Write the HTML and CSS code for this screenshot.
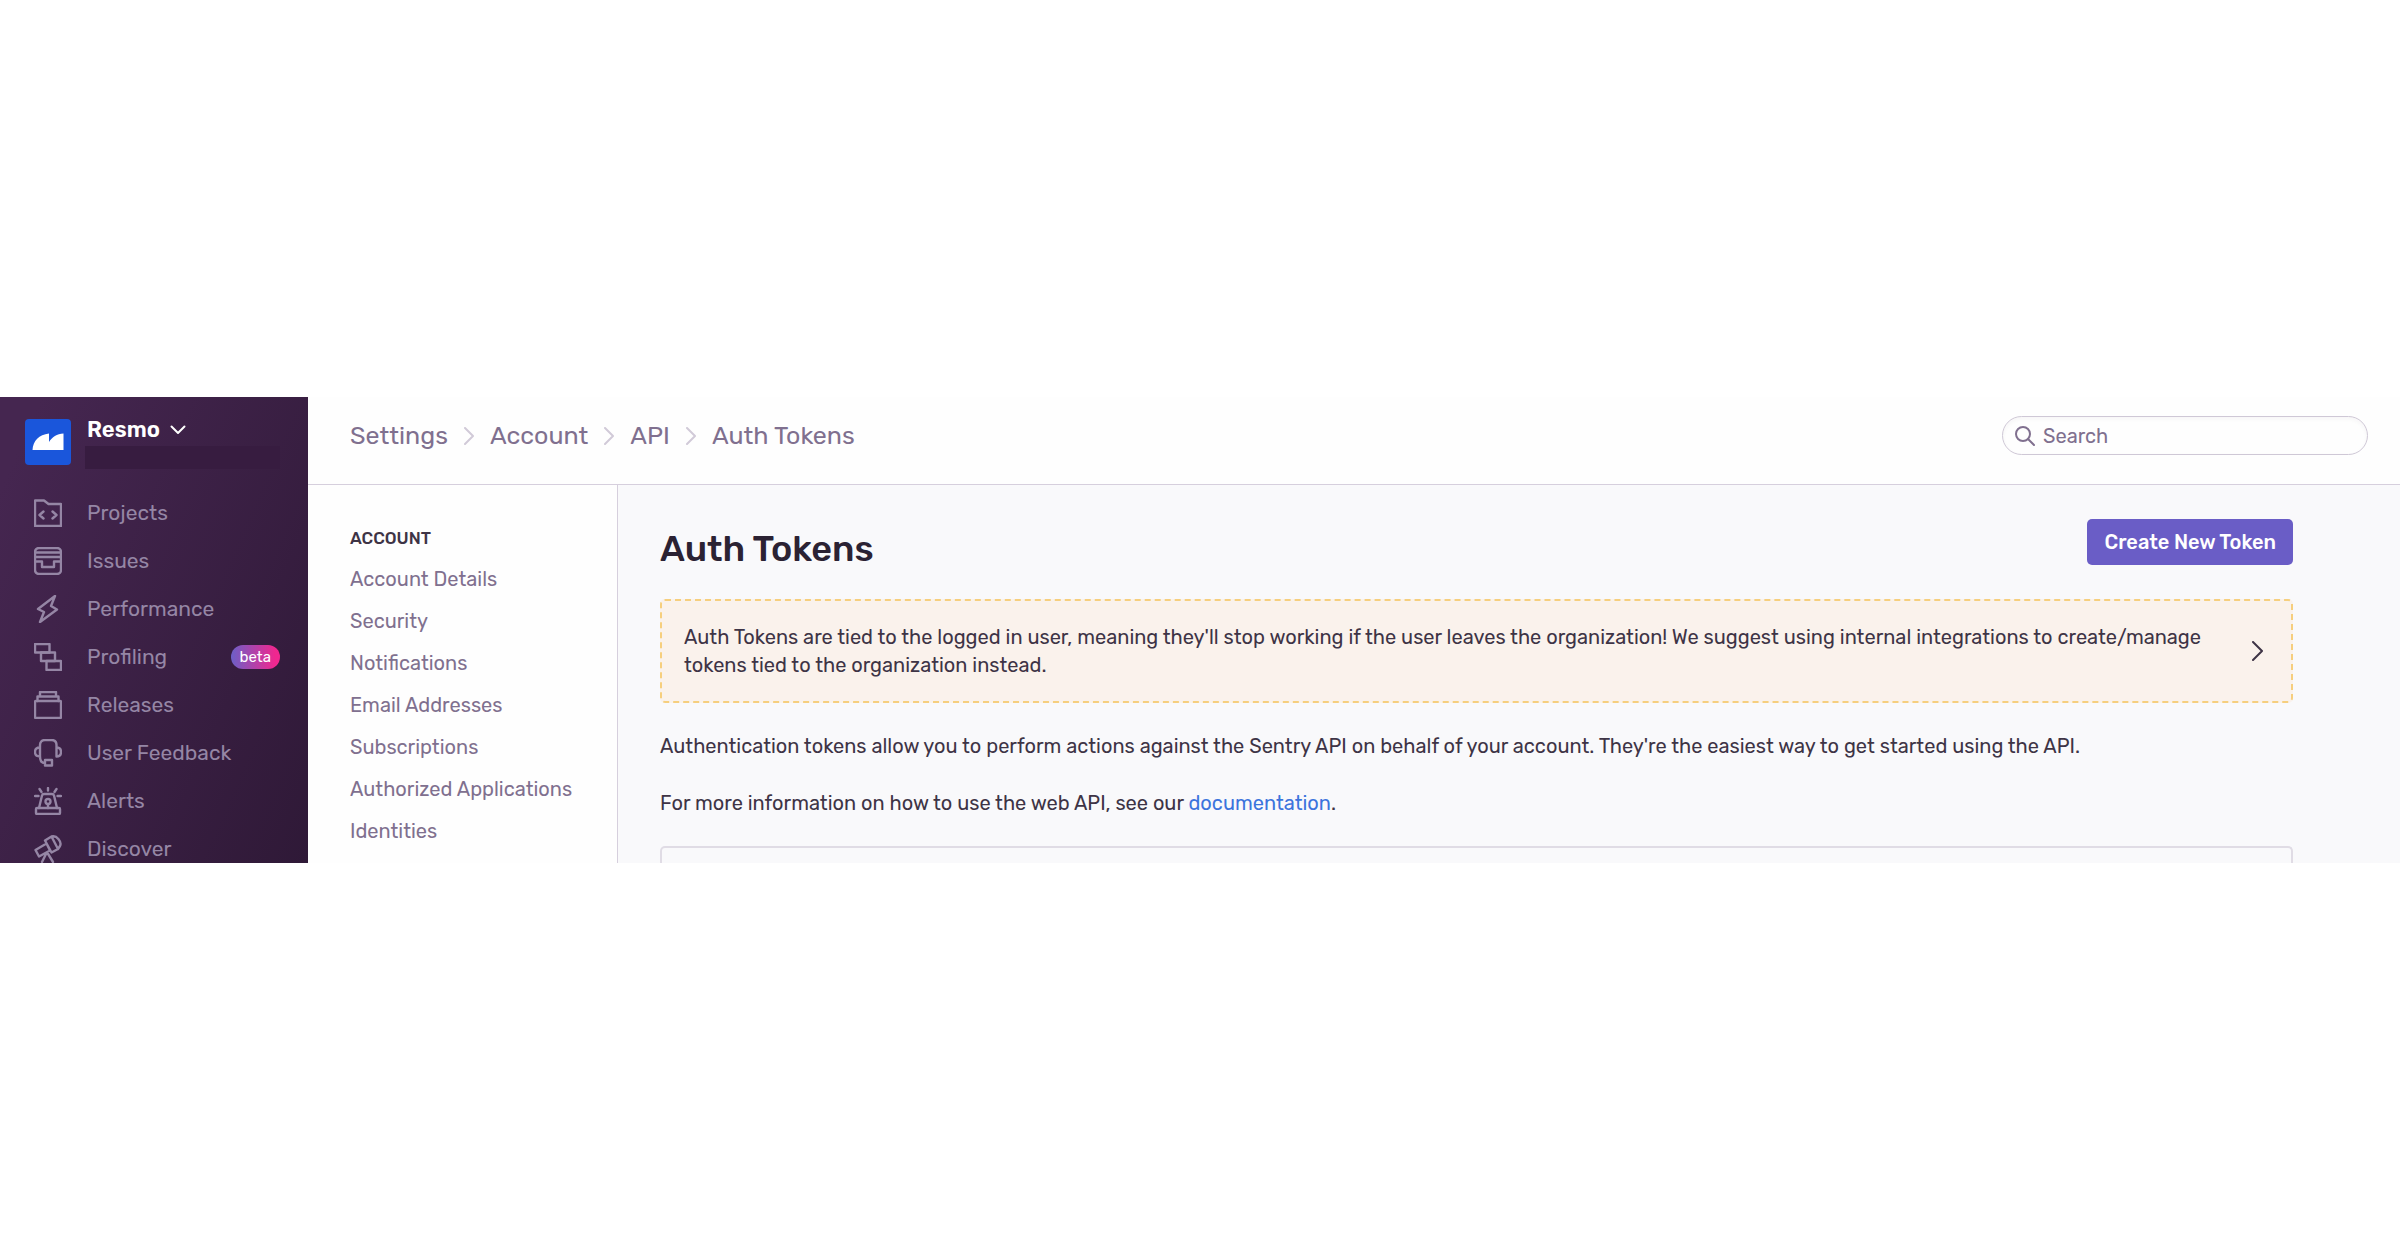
FILE: index.html
```html
<!DOCTYPE html>
<html lang="en">
<head>
<meta charset="utf-8">
<title>Auth Tokens</title>
<link rel="stylesheet" href="styles.css">
</head>
<body>
<div class="app">
  <aside class="sidebar">
    <div class="org">
      <svg class="org-logo" viewBox="0 0 46 46" aria-hidden="true">
        <rect width="46" height="46" rx="4" fill="#1a56db"/>
        <path d="M7.500 31C8 22 14 15.500 24 14.500V23C27 18 32 15 38.500 14.500V31Z" fill="#fff"/>
      </svg>
      <div class="org-info">
        <button class="org-name" type="button">Resmo
          <svg class="caret" viewBox="0 0 16 10" aria-hidden="true"><path d="M1.500 1.500L8 8L14.500 1.500"/></svg>
        </button>
        <div class="org-user"></div>
      </div>
    </div>
    <nav class="menu" aria-label="Main">
      <a class="menu-item" href="#">
        <svg class="icon" viewBox="0 0 28 28" aria-hidden="true"><path d="M1 1.500H10L14.500 5H27V27H1ZM9.500 12.500L5.500 16L9.500 19.500M18.500 12.500L22.500 16L18.500 19.500"/></svg>
        <span>Projects</span>
      </a>
      <a class="menu-item" href="#">
        <svg class="icon" viewBox="0 0 28 28" aria-hidden="true"><rect x="1" y="1" width="26" height="26" rx="4"/><path d="M1 5.500H27M1 10H27M1 14.500H8V20H20V14.500H27"/></svg>
        <span>Issues</span>
      </a>
      <a class="menu-item" href="#">
        <svg class="icon" viewBox="0 0 28 28" aria-hidden="true"><path d="M21 1L4 14L10 17L6 27L23 14.500L17 11Z"/></svg>
        <span>Performance</span>
      </a>
      <a class="menu-item" href="#">
        <svg class="icon" viewBox="0 0 28 28" aria-hidden="true"><rect x="1" y="1" width="14.500" height="8.500"/><rect x="7" y="9.500" width="14" height="8.500"/><rect x="12.500" y="18" width="14.500" height="9"/></svg>
        <span>Profiling</span>
        <span class="badge">beta</span>
      </a>
      <a class="menu-item" href="#">
        <svg class="icon" viewBox="0 0 28 28" aria-hidden="true"><rect x="1" y="10" width="26" height="17" rx="1"/><path d="M3.500 10V5.500H24.500V10M6 5.500V1H22V5.500"/></svg>
        <span>Releases</span>
      </a>
      <a class="menu-item" href="#">
        <svg class="icon" viewBox="0 0 28 28" aria-hidden="true"><path d="M6 17.500V6C6 3 8 1 11 1H17.500C20.500 1 22.500 3 22.500 6V17.500M6 8.500C2.500 8.500 1 10 1 13C1 16 2.500 17.500 6 17.500M22.500 8.500C25.500 8.500 27 10 27 13C27 16 25.500 17.500 22.500 17.500M6 17.500C6 22 7.500 24 11 24M11 21H18V26.500H11Z"/></svg>
        <span>User Feedback</span>
      </a>
      <a class="menu-item" href="#">
        <svg class="icon" viewBox="0 0 28 28" aria-hidden="true"><rect x="2" y="21" width="24" height="6" rx="1"/><path d="M5 21L8 8.500C8.300 7.500 9 7 10 7H18C19 7 19.700 7.500 20 8.500L23 21M14 17V21M14 1V3.500M5.500 2L7.500 5M22.500 2L20.500 5M1 9H4.500M23.500 9H27"/><circle cx="14" cy="14.500" r="2.500"/></svg>
        <span>Alerts</span>
      </a>
      <a class="menu-item" href="#">
        <svg class="icon" viewBox="0 0 28 28" aria-hidden="true"><path d="M1.500 15L12.500 8.500L16 15.500L5 21.500ZM11 5.500L17.500 1.500L24 14L17.500 17.500ZM17.500 1.500C23 0 28 7 26 11L24 14M12.500 18L8 27M13.500 18L19 27"/></svg>
        <span>Discover</span>
      </a>
    </nav>
  </aside>

  <div class="page">
    <header class="topbar">
      <nav class="crumbs" aria-label="Breadcrumb">
        <a href="#">Settings</a>
        <svg class="crumb-sep" viewBox="0 0 10 18" aria-hidden="true"><path d="M1 1L9 9L1 17"/></svg>
        <a href="#">Account</a>
        <svg class="crumb-sep" viewBox="0 0 10 18" aria-hidden="true"><path d="M1 1L9 9L1 17"/></svg>
        <a href="#">API</a>
        <svg class="crumb-sep" viewBox="0 0 10 18" aria-hidden="true"><path d="M1 1L9 9L1 17"/></svg>
        <a href="#">Auth Tokens</a>
      </nav>
      <label class="search">
        <svg class="search-icon" viewBox="0 0 20 20" aria-hidden="true"><circle cx="8" cy="8" r="7"/><path d="M13 13L19 19"/></svg>
        <input type="search" placeholder="Search" aria-label="Search">
      </label>
    </header>

    <div class="body">
      <nav class="subnav" aria-label="Account settings">
        <h2 class="subnav-title">Account</h2>
        <a href="#">Account Details</a>
        <a href="#">Security</a>
        <a href="#">Notifications</a>
        <a href="#">Email Addresses</a>
        <a href="#">Subscriptions</a>
        <a href="#">Authorized Applications</a>
        <a href="#">Identities</a>
      </nav>

      <main class="content">
        <div class="title-row">
          <h1>Auth Tokens</h1>
          <button class="primary" type="button">Create New Token</button>
        </div>
        <a class="notice" href="#">
          <span>Auth Tokens are tied to the logged in user, meaning they'll stop working if the user leaves the organization! We suggest using internal integrations to create/manage tokens tied to the organization instead.</span>
          <svg class="notice-arrow" viewBox="0 0 12 20" aria-hidden="true"><path d="M1 1L10 10L1 19"/></svg>
        </a>
        <p>Authentication tokens allow you to perform actions against the Sentry API on behalf of your account. They're the easiest way to get started using the API.</p>
        <p>For more information on how to use the web API, see our <a href="#">documentation</a>.</p>
        <div class="panel"></div>
      </main>
    </div>
  </div>
</div>
</body>
</html>
```
FILE: styles.css
```css
* {
  box-sizing: border-box;
}

body {
  margin: 0;
  min-height: 100vh;
  display: flex;
  align-items: center;
  background: #fff;
  color: #3e3446;
  font-family: Rubik, Roboto, sans-serif;
  font-size: 20px;
  font-weight: 400;
  line-height: 28px;
}

a {
  color: inherit;
  text-decoration: none;
}

button,
input {
  font: inherit;
  color: inherit;
  border: 0;
  padding: 0;
  background: none;
}

svg {
  display: block;
  flex: none;
  fill: none;
  stroke-linecap: round;
  stroke-linejoin: round;
}

.app {
  width: 100%;
  display: flex;
}

/* Sidebar */

.sidebar {
  flex: none;
  width: 308px;
  padding: 22px 28px 0 25px;
  display: flex;
  flex-direction: column;
  gap: 30px;
  background: linear-gradient(294deg, #2f1937 0%, #452650 92%);
  color: #9586a5;
}

.org {
  display: flex;
  gap: 14px;
}

.org-logo {
  width: 46px;
  height: 46px;
}

.org-info {
  flex: 1;
}

.org-name {
  display: flex;
  align-items: center;
  gap: 10px;
  height: 22px;
  margin-bottom: 5px;
  padding-left: 2px;
  color: #fff;
  font-size: 22px;
  font-weight: 600;
}

.caret {
  width: 16px;
  height: 10px;
  stroke: #fff;
  stroke-width: 2;
}

.org-user {
  height: 23px;
  background: #371c40;
}

.menu {
  display: flex;
  flex-direction: column;
  gap: 20px;
  padding-left: 9px;
}

.menu-item {
  display: flex;
  align-items: center;
  gap: 25px;
  height: 28px;
  font-size: 21px;
}

.icon {
  width: 28px;
  height: 28px;
  stroke: currentColor;
  stroke-width: 2.4;
}

.badge {
  margin-left: auto;
  padding: 0 9px;
  border-radius: 12px;
  background: linear-gradient(90deg, #6c5fc7, #f0278f 90%);
  color: #fff;
  font-size: 15px;
  line-height: 24px;
}

/* Header */

.page {
  flex: 1;
  min-width: 0;
  display: flex;
  flex-direction: column;
}

.topbar {
  display: flex;
  align-items: center;
  justify-content: space-between;
  height: 88px;
  padding: 0 32px 10px 42px;
  border-bottom: 1px solid #d6cfdd;
  background: #fefefe;
  color: #80708f;
}

.crumbs {
  display: flex;
  align-items: center;
  gap: 16px;
  font-size: 25px;
}

.crumb-sep {
  width: 10px;
  height: 18px;
  stroke: #d1cad8;
  stroke-width: 2;
}

.search {
  display: flex;
  align-items: center;
  gap: 8px;
  width: 366px;
  height: 39px;
  padding: 0 12px;
  border: 1px solid #cfc8d6;
  border-radius: 20px;
  box-shadow: inset 0 2px 4px rgba(43, 34, 51, 0.04);
}

.search-icon {
  width: 20px;
  height: 20px;
  stroke: #80708f;
  stroke-width: 2;
}

.search input {
  flex: 1;
  min-width: 0;
}

.search input::placeholder {
  color: #80708f;
  opacity: 1;
}

/* Settings navigation */

.body {
  flex: 1;
  display: flex;
}

.subnav {
  flex: none;
  display: flex;
  flex-direction: column;
  gap: 14px;
  width: 310px;
  padding: 39px 20px 0 42px;
  border-right: 1px solid #d6cfdd;
  background: #fefefe;
  color: #80708f;
}

.subnav-title {
  margin: 0 0 -1px;
  color: #3e3446;
  font-size: 17px;
  font-weight: 500;
  text-transform: uppercase;
}

/* Content */

.content {
  flex: 1;
  min-width: 0;
  display: flex;
  flex-direction: column;
  padding: 34px 107px 0 42px;
  background: #f9f9fb;
}

.title-row {
  display: flex;
  justify-content: space-between;
  align-items: flex-start;
  margin-bottom: 20px;
}

h1 {
  margin: 0;
  color: #2b2233;
  font-size: 36px;
  font-weight: 500;
  line-height: 60px;
}

.primary {
  height: 46px;
  padding: 0 17px;
  border-radius: 5px;
  background: #6a5dc6;
  color: #fff;
  font-weight: 500;
}

.notice {
  display: flex;
  align-items: center;
  justify-content: space-between;
  gap: 50px;
  margin-bottom: 29px;
  padding: 22px 27px 22px 22px;
  border: 2px dashed #f6cf7e;
  border-radius: 5px;
  background: #faf2ec;
}

.notice-arrow {
  width: 12px;
  height: 20px;
  stroke: #3e3446;
  stroke-width: 2;
}

p {
  margin: 0 0 29px;
}

p a {
  color: #3c74dd;
}

.panel {
  flex: 1;
  min-height: 16px;
  border: 2px solid #e0dce5;
  border-bottom: 0;
  border-radius: 5px 5px 0 0;
}
```
